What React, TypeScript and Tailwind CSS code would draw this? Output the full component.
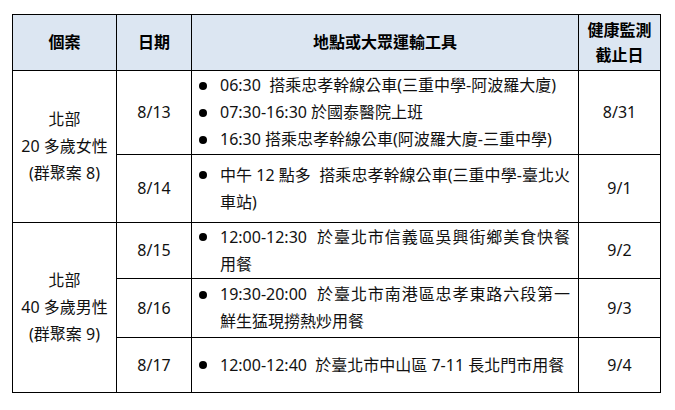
import type { ReactNode } from "react";

const Bullet = ({ children }: { children: ReactNode }) => (
  <div className="flex">
    <span className="w-[21px] h-[27px] flex items-center shrink-0">
      <span className="w-[8px] h-[8px] rounded-full bg-black" />
    </span>
    <div className="flex-1">{children}</div>
  </div>
);

const Line = ({ children }: { children: ReactNode }) => (
  <span className="block [text-align-last:justify]">{children}</span>
);

const td = "border border-black text-center align-middle";
const listTd = "border border-black align-middle pl-[7px] pr-[8px] text-left";

export default function App() {
  return (
    <div className="w-[675px] h-[410px] bg-white pt-[14px] pl-[12px] font-['Noto_Sans','Noto_Sans_CJK_TC',sans-serif] text-[16px] leading-[27px] text-[#111]">
      <table className="table-fixed border-collapse w-[649px]">
        <colgroup>
          <col className="w-[104px]" />
          <col className="w-[75px]" />
          <col className="w-[387px]" />
          <col className="w-[82px]" />
        </colgroup>
        <thead>
          <tr className="h-[56px] bg-[#dce6f2] font-bold leading-[25px] text-black">
            <th className={td}>個案</th>
            <th className={td}>日期</th>
            <th className={td}>地點或大眾運輸工具</th>
            <th className={td}>
              健康監測
              <br />
              截止日
            </th>
          </tr>
        </thead>
        <tbody>
          <tr className="h-[84px]">
            <td className={td} rowSpan={2}>
              北部
              <br />
              20 多歲女性
              <br />
              (群聚案 8)
            </td>
            <td className={td}>8/13</td>
            <td className={listTd}>
              <Bullet>06:30&nbsp; 搭乘忠孝幹線公車(三重中學-阿波羅大廈)</Bullet>
              <Bullet>07:30-16:30 於國泰醫院上班</Bullet>
              <Bullet>16:30 搭乘忠孝幹線公車(阿波羅大廈-三重中學)</Bullet>
            </td>
            <td className={td}>8/31</td>
          </tr>
          <tr className="h-[68px]">
            <td className={td}>8/14</td>
            <td className={listTd}>
              <Bullet>
                <Line>中午 12 點多&nbsp; 搭乘忠孝幹線公車(三重中學-臺北火</Line>
                車站)
              </Bullet>
            </td>
            <td className={td}>9/1</td>
          </tr>
          <tr className="h-[56px]">
            <td className={td} rowSpan={3}>
              北部
              <br />
              40 多歲男性
              <br />
              (群聚案 9)
            </td>
            <td className={td}>8/15</td>
            <td className={listTd}>
              <Bullet>
                <Line>12:00-12:30&nbsp; 於臺北市信義區吳興街鄉美食快餐</Line>
                用餐
              </Bullet>
            </td>
            <td className={td}>9/2</td>
          </tr>
          <tr className="h-[59px]">
            <td className={td}>8/16</td>
            <td className={listTd}>
              <Bullet>
                <Line>19:30-20:00&nbsp; 於臺北市南港區忠孝東路六段第一</Line>
                鮮生猛現撈熱炒用餐
              </Bullet>
            </td>
            <td className={td}>9/3</td>
          </tr>
          <tr className="h-[55px]">
            <td className={td}>8/17</td>
            <td className={listTd}>
              <Bullet>12:00-12:40&nbsp; 於臺北市中山區 7-11 長北門市用餐</Bullet>
            </td>
            <td className={td}>9/4</td>
          </tr>
        </tbody>
      </table>
    </div>
  );
}
